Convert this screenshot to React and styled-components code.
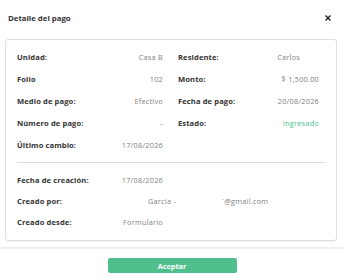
import React from 'react';
import styled, { createGlobalStyle } from 'styled-components';

const GlobalStyle = createGlobalStyle`
  html, body {
    margin: 0;
    padding: 0;
    background: #ffffff;
  }
  body {
    font-family: "Open Sans", "Noto Sans", sans-serif;
    color: #333333;
  }
`;

const Modal = styled.div`
  width: 344px;
  height: 278px;
  display: flex;
  flex-direction: column;
  background: #fff;
`;

const Header = styled.div`
  display: flex;
  align-items: center;
  justify-content: space-between;
  height: 36px;
  padding: 0 12px 0 8px;
  box-sizing: border-box;
`;

const Title = styled.h1`
  margin: 0;
  font-size: 7.8px;
  font-weight: 700;
  color: #333;
`;

const CloseButton = styled.button`
  border: none;
  background: none;
  padding: 0;
  width: 8px;
  height: 8px;
  display: flex;
  align-items: center;
  justify-content: center;
  cursor: pointer;
`;

const Body = styled.div`
  padding: 3px 7px 0 5px;
`;

const Card = styled.div`
  border: 1px solid #dedede;
  border-radius: 3px;
  padding: 6px 10px 8px 11px;
  box-shadow: 0 1px 1px rgba(0, 0, 0, 0.05);
`;

const Grid = styled.div`
  display: grid;
  grid-template-columns: 146px 1fr;
  column-gap: 15px;
`;

const Column = styled.div`
  display: flex;
  flex-direction: column;
  padding-right: ${(p) => p.$inset || 0}px;
`;

const Row = styled.div`
  display: flex;
  align-items: center;
  justify-content: space-between;
  height: ${(p) => p.$h || 22}px;
  white-space: nowrap;
`;

const WideRow = styled.div`
  display: grid;
  grid-template-columns: 131px auto;
  align-items: center;
  height: 21px;
  white-space: nowrap;
`;

const Label = styled.span`
  font-size: 7.6px;
  font-weight: 700;
  letter-spacing: 0.1px;
  color: #333;
`;

const Value = styled.span`
  font-size: 7.3px;
  letter-spacing: 0.25px;
  color: ${(p) => (p.$status ? '#4cc08c' : '#808080')};
`;

const Redacted = styled.span`
  display: inline-block;
  width: ${(p) => p.$w}px;
`;

const Divider = styled.hr`
  border: none;
  border-top: 1px solid #dcdcdc;
  margin: 6px 0 6px 0;
`;

const Footer = styled.div`
  margin-top: 6px;
  border-top: 2px solid #efefef;
  flex: 1;
  display: flex;
  justify-content: center;
  padding-top: 9px;
`;

const AcceptButton = styled.button`
  width: 129px;
  height: 15px;
  border: none;
  border-radius: 2px;
  background: #4fbf8d;
  color: #fff;
  font-family: inherit;
  font-size: 7.3px;
  font-weight: 700;
  padding: 0;
`;

const topLeft = [
  ['Unidad:', 'Casa B'],
  ['Folio', '102'],
  ['Medio de pago:', 'Efectivo'],
  ['Número de pago:', '-'],
  ['Último cambio:', '17/08/2026'],
];

export default function App() {
  return (
    <>
      <GlobalStyle />
      <Modal>
        <Header>
          <Title>Detalle del pago</Title>
          <CloseButton aria-label="Cerrar">
            <svg width="6" height="6" viewBox="0 0 6 6">
              <path d="M1 1 L5 5 M5 1 L1 5" stroke="#222" strokeWidth="1.4" strokeLinecap="square" />
            </svg>
          </CloseButton>
        </Header>
        <Body>
          <Card>
            <Grid>
              <Column>
                {topLeft.map(([l, v]) => (
                  <Row key={l}>
                    <Label>{l}</Label>
                    <Value>{v}</Value>
                  </Row>
                ))}
              </Column>
              <Column $inset={7}>
                <Row>
                  <Label>Residente:</Label>
                  <Value>
                    Carlos<Redacted $w={19} />
                  </Value>
                </Row>
                <Row>
                  <Label>Monto:</Label>
                  <Value>$ 1,500.00</Value>
                </Row>
                <Row>
                  <Label>Fecha de pago:</Label>
                  <Value>20/08/2026</Value>
                </Row>
                <Row>
                  <Label>Estado:</Label>
                  <Value $status>Ingresado</Value>
                </Row>
              </Column>
            </Grid>
            <Divider />
            <Grid>
              <Column>
                <Row $h={21}>
                  <Label>Fecha de creación:</Label>
                  <Value>17/08/2026</Value>
                </Row>
                <WideRow>
                  <Label>Creado por:</Label>
                  <Value>
                    Garcia -<Redacted $w={46} />`@gmail.com
                  </Value>
                </WideRow>
                <Row $h={21}>
                  <Label>Creado desde:</Label>
                  <Value>Formulario</Value>
                </Row>
              </Column>
            </Grid>
          </Card>
        </Body>
        <Footer>
          <AcceptButton>Aceptar</AcceptButton>
        </Footer>
      </Modal>
    </>
  );
}
